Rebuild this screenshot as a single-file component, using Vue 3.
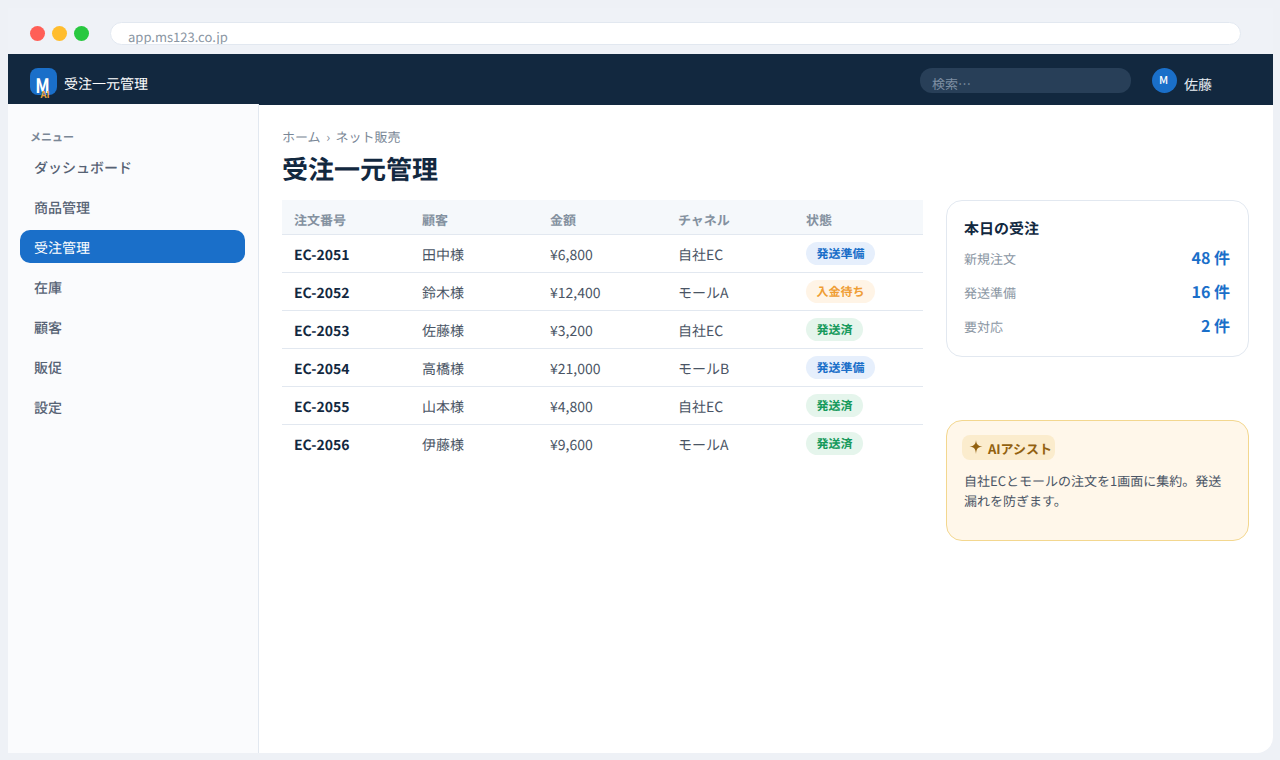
<script setup>
const menu = [
  { label: 'ダッシュボード' },
  { label: '商品管理' },
  { label: '受注管理', active: true },
  { label: '在庫' },
  { label: '顧客' },
  { label: '販促' },
  { label: '設定' },
]
const orders = [
  { id: 'EC-2051', who: '田中様', amount: '¥6,800', channel: '自社EC', status: '発送準備', tone: 'blue' },
  { id: 'EC-2052', who: '鈴木様', amount: '¥12,400', channel: 'モールA', status: '入金待ち', tone: 'orange' },
  { id: 'EC-2053', who: '佐藤様', amount: '¥3,200', channel: '自社EC', status: '発送済', tone: 'green' },
  { id: 'EC-2054', who: '高橋様', amount: '¥21,000', channel: 'モールB', status: '発送準備', tone: 'blue' },
  { id: 'EC-2055', who: '山本様', amount: '¥4,800', channel: '自社EC', status: '発送済', tone: 'green' },
  { id: 'EC-2056', who: '伊藤様', amount: '¥9,600', channel: 'モールA', status: '発送済', tone: 'green' },
]
const stats = [
  { label: '新規注文', value: '48 件' },
  { label: '発送準備', value: '16 件' },
  { label: '要対応', value: '2 件' },
]
</script>

<template>
  <div class="page">
    <div class="win">
      <div class="chrome">
        <span class="dot red"></span>
        <span class="dot yellow"></span>
        <span class="dot green"></span>
        <div class="url">app.ms123.co.jp</div>
      </div>
      <header class="top">
        <div class="logo">
          <span class="logo-m">M</span>
          <span class="logo-ai">AI</span>
        </div>
        <div class="app-name">受注一元管理</div>
        <div class="search">検索…</div>
        <div class="avatar">M</div>
        <div class="user">佐藤</div>
      </header>
      <div class="body">
        <aside class="side">
          <div class="side-title">メニュー</div>
          <div v-for="m in menu" :key="m.label" class="nav" :class="{ active: m.active }">{{ m.label }}</div>
        </aside>
        <main class="main">
          <div class="crumbs"><span>ホーム</span><span>›</span><span>ネット販売</span></div>
          <h1 class="title">受注一元管理</h1>
          <div class="cols">
            <table class="tbl">
              <thead>
                <tr>
                  <th>注文番号</th><th>顧客</th><th>金額</th><th>チャネル</th><th>状態</th>
                </tr>
              </thead>
              <tbody>
                <tr v-for="o in orders" :key="o.id">
                  <td class="oid">{{ o.id }}</td>
                  <td>{{ o.who }}</td>
                  <td>{{ o.amount }}</td>
                  <td>{{ o.channel }}</td>
                  <td><span class="pill" :class="o.tone">{{ o.status }}</span></td>
                </tr>
              </tbody>
            </table>
            <div class="right">
              <section class="card">
                <h2 class="card-title">本日の受注</h2>
                <div v-for="s in stats" :key="s.label" class="stat">
                  <span class="stat-label">{{ s.label }}</span>
                  <span class="stat-value">{{ s.value }}</span>
                </div>
              </section>
              <section class="ai">
                <div class="ai-tag">
                  <svg class="spark" width="14" height="14" viewBox="0 0 14 14">
                    <path d="M7 0 C7.4 4 8.6 6 13.5 6.6 C8.6 7.2 7.4 9 7 14 C6.6 9 5.4 7.2 .5 6.6 C5.4 6 6.6 4 7 0 Z" fill="#92610f" />
                  </svg>
                  <span class="ai-label">AIアシスト</span>
                </div>
                <p class="ai-text">自社ECとモールの注文を1画面に集約。発送漏れを防ぎます。</p>
              </section>
            </div>
          </div>
        </main>
      </div>
    </div>
  </div>
</template>

<style>
html, body { margin: 0; background: #eef1f6; }
</style>

<style scoped>
.page {
  width: 1280px;
  height: 760px;
  box-sizing: border-box;
  padding: 8px 7px 7px 8px;
  background: #eef1f6;
  font-family: "Noto Sans CJK JP", "Noto Sans", sans-serif;
  text-rendering: geometricPrecision;
  overflow: hidden;
}
.win {
  height: 745px;
  display: flex;
  flex-direction: column;
  border-radius: 0 0 16px 0;
  background: #fff;
  overflow: hidden;
}
.chrome {
  height: 46px;
  flex: none;
  display: flex;
  align-items: center;
  padding: 4px 32px 0 22px;
  box-sizing: border-box;
  background: #eff2f7;
}
.dot { width: 15px; height: 15px; border-radius: 50%; margin-right: 7px; flex: none; }
.red { background: #ff5f57; }
.yellow { background: #ffbd2e; }
.green { background: #28c840; }
.url {
  margin-left: 14px;
  flex: 1;
  height: 23px;
  box-sizing: border-box;
  background: #fff;
  border: 1px solid #e2e8f0;
  border-radius: 12px;
  padding: 0 17px;
  color: #8a96a3;
  font-size: 13px;
  line-height: 28px;
  overflow: hidden;
}
.top {
  height: 51px;
  flex: none;
  background: #12283f;
  display: flex;
  padding: 14px 0 0 22px;
  box-sizing: border-box;
  color: #fff;
}
.logo {
  position: relative;
  width: 27px;
  height: 27px;
  border-radius: 8px;
  background: #1a6fc9;
  flex: none;
}
.logo-m {
  position: absolute;
  left: 0;
  top: 3px;
  width: 25px;
  text-align: center;
  font-size: 20px;
  line-height: 28px;
  font-weight: 700;
  color: #fff;
  transform: scaleX(0.85);
}
.logo-ai {
  position: absolute;
  left: 10.5px;
  top: 20px;
  font-size: 9.5px;
  line-height: 12px;
  font-weight: 700;
  color: #e8a038;
}
.app-name {
  margin-left: 7px;
  width: 84px;
  flex: none;
  font-size: 14px;
  line-height: 33px;
  font-weight: 400;
}
.search {
  margin-left: 772px;
  width: 211px;
  height: 25px;
  border-radius: 12px;
  background: #283f58;
  color: #7f8fa3;
  font-size: 13px;
  line-height: 31px;
  padding-left: 12px;
  box-sizing: border-box;
  overflow: hidden;
  flex: none;
}
.avatar {
  margin-left: 21px;
  width: 25px;
  height: 25px;
  border-radius: 50%;
  background: #1a6fc9;
  color: #fff;
  font-size: 11px;
  font-weight: 500;
  line-height: 24px;
  text-indent: -2px;
  text-align: center;
  flex: none;
}
.user {
  margin-left: 7px;
  font-size: 14px;
  line-height: 35px;
  color: #e8edf3;
}
.body { flex: 1; display: flex; min-height: 0; }
.side {
  position: relative;
  margin-top: -1px;
  width: 251px;
  flex: none;
  box-sizing: border-box;
  background: #fafbfd;
  border-right: 1px solid #e2e8f0;
  padding: 25px 13px 0 12px;
}
.side-title {
  font-size: 11px;
  line-height: 16px;
  font-weight: 700;
  color: #7a8796;
  padding-left: 10px;
  margin-bottom: 5px;
}
.nav {
  height: 33px;
  margin-bottom: 7px;
  border-radius: 10px;
  padding-left: 14px;
  font-size: 14px;
  line-height: 37px;
  color: #566274;
  font-weight: 500;
}
.nav.active { background: #1a6fc9; color: #fff; font-weight: 400; }
.main { flex: 1; padding: 21px 24px 0 23px; min-width: 0; }
.crumbs {
  font-size: 13px;
  line-height: 21px;
  color: #7a8796;
  display: flex;
  gap: 5.5px;
}
.title {
  margin: 3px 0 0;
  font-size: 26px;
  line-height: 38px;
  font-weight: 700;
  color: #12283f;
}
.cols { display: flex; margin-top: 12px; gap: 23px; align-items: flex-start; }
.tbl {
  width: 641px;
  flex: none;
  border-collapse: separate;
  border-spacing: 0;
  table-layout: fixed;
  font-size: 14px;
}
.tbl th {
  height: 35px;
  padding: 4px 12px 0;
  box-sizing: border-box;
  text-align: left;
  font-size: 13px;
  font-weight: 700;
  color: #8491a0;
  background: #f5f8fb;
  border-bottom: 1px solid #e2e8f0;
}
.tbl th:not(:last-child) { width: 128px; }
.tbl td {
  height: 38px;
  padding: 3px 12px 0;
  box-sizing: border-box;
  color: #4a5565;
  border-bottom: 1px solid #e2e8f0;
  vertical-align: top;
  line-height: 34px;
}
.tbl tr:last-child td { border-bottom: none; }
.tbl .oid { font-weight: 700; color: #12283f; }
.pill {
  display: inline-block;
  height: 23px;
  line-height: 24px;
  margin-top: 4px;
  padding: 0 10.5px;
  border-radius: 12px;
  font-size: 12px;
  font-weight: 700;
  vertical-align: top;
}
.pill.blue { background: #e6effc; color: #1a6fc9; }
.pill.orange { background: #fff4e6; color: #ef9d34; }
.pill.green { background: #e5f5ec; color: #169a5c; }
.right { width: 303px; flex: none; display: flex; flex-direction: column; gap: 63px; }
.card {
  height: 157px;
  box-sizing: border-box;
  border: 1px solid #e2e8f0;
  border-radius: 16px;
  padding: 16px 18px 0 17px;
  background: #fff;
}
.card-title {
  margin: 0 0 -1px;
  font-size: 15px;
  line-height: 24px;
  font-weight: 700;
  color: #12283f;
}
.stat {
  height: 34px;
  display: flex;
  justify-content: space-between;
  align-items: center;
}
.stat-label { font-size: 13px; color: #8a96a3; position: relative; top: 1px; }
.stat-value { font-size: 16px; font-weight: 700; color: #1a6fc9; }
.ai {
  height: 121px;
  box-sizing: border-box;
  border: 1px solid #f3d78f;
  border-radius: 16px;
  background: #fff7ea;
  padding: 14px 16px 0 17px;
}
.ai-tag {
  display: inline-flex;
  align-items: center;
  height: 25px;
  margin-left: -2px;
  padding: 0 3px 0 7px;
  border-radius: 8px;
  background: #fbeccd;
  color: #92610f;
  font-size: 13px;
  font-weight: 700;
}
.ai-label { padding-top: 2px; }
.spark { margin-right: 5px; position: relative; top: -1px; }
.ai-text {
  margin: 11px 0 0;
  font-size: 13px;
  line-height: 20px;
  color: #4a5565;
}
</style>
